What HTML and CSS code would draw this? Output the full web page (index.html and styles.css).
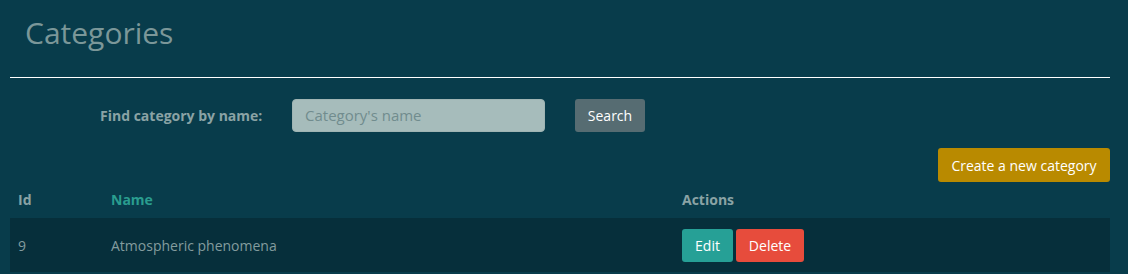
FILE: index.html
```html
<!DOCTYPE html>
<html>
<head>
<meta charset="utf-8">
<link rel="stylesheet" href="styles.css">
</head>
<body>
<div class="page">
  <h1 class="title">Categories</h1>
  <hr class="rule">
  <form class="finder">
    <label class="finder-label">Find category by name:</label>
    <input class="finder-input" type="text" placeholder="Category's name">
    <button type="button" class="btn btn-search">Search</button>
  </form>
  <div class="create-row">
    <button type="button" class="btn btn-create">Create a new category</button>
  </div>
  <table class="grid">
    <thead>
      <tr>
        <th class="col-id">Id</th>
        <th class="col-name sorted">Name</th>
        <th class="col-actions">Actions</th>
      </tr>
    </thead>
    <tbody>
      <tr>
        <td>9</td>
        <td>Atmospheric phenomena</td>
        <td class="actions">
          <button type="button" class="btn btn-edit">Edit</button>
          <button type="button" class="btn btn-delete">Delete</button>
        </td>
      </tr>
    </tbody>
  </table>
</div>
</body>
</html>
```
FILE: styles.css
```css
html, body {
  margin: 0;
  padding: 0;
  background: #083c4b;
  font-family: "Open Sans", "Liberation Sans", sans-serif;
  color: #8aa3a5;
}
.page {
  padding: 0 18px 0 10px;
}
.title {
  margin: 0;
  padding: 13px 0 0 15px;
  height: 77px;
  box-sizing: border-box;
  font-size: 30px;
  font-weight: 400;
  line-height: 40px;
  color: #7b9799;
}
.rule {
  margin: 0;
  border: 0;
  height: 1px;
  background: #ffffff;
}
.finder {
  display: flex;
  align-items: center;
  padding: 20px 0 0 90px;
  height: 54px;
  box-sizing: border-box;
}
.finder-label {
  font-size: 14px;
  font-weight: 700;
  color: #8aa3a5;
  width: 192px;
}
.finder-input {
  width: 253px;
  height: 33px;
  box-sizing: border-box;
  border: 1px solid #9fb4b3;
  border-radius: 4px;
  background: #a6bcbb;
  padding: 0 12px;
  font-family: "Open Sans", "Liberation Sans", sans-serif;
  font-size: 15px;
  color: #5f7a7d;
  outline: none;
}
.finder-input::placeholder {
  color: #718c8e;
}
.btn {
  border: 0;
  border-radius: 3px;
  font-family: "Open Sans", "Liberation Sans", sans-serif;
  font-size: 14px;
  color: #ffffff;
  height: 34px;
  padding: 0 12px;
  cursor: pointer;
}
.btn-search {
  margin-left: 30px;
  width: 70px;
  padding: 0;
  height: 33px;
  background: #566c72;
}
.create-row {
  display: flex;
  justify-content: flex-end;
  padding-top: 16px;
}
.btn-create {
  width: 172px;
  padding: 0;
  background: #b98a00;
}
.grid {
  width: 100%;
  border-collapse: collapse;
  font-size: 14px;
}
.grid th {
  text-align: left;
  font-weight: 700;
  padding: 7px 8px 9px;
  height: 20px;
  color: #8aa3a5;
}
.grid th.sorted {
  color: #2a9d8f;
}
.col-id { width: 77px; }
.col-name { width: 555px; }
.grid td {
  background: #062f3b;
  height: 54px;
  box-sizing: border-box;
  padding: 0 8px;
  color: #839c9e;
  vertical-align: middle;
}
.actions {
  display: flex;
  align-items: center;
  gap: 3px;
  height: 54px;
}
.btn-edit {
  width: 51px;
  height: 33px;
  padding: 0;
  background: #26a096;
}
.btn-delete {
  width: 68px;
  height: 33px;
  padding: 0;
  background: #e74c3c;
}
```
